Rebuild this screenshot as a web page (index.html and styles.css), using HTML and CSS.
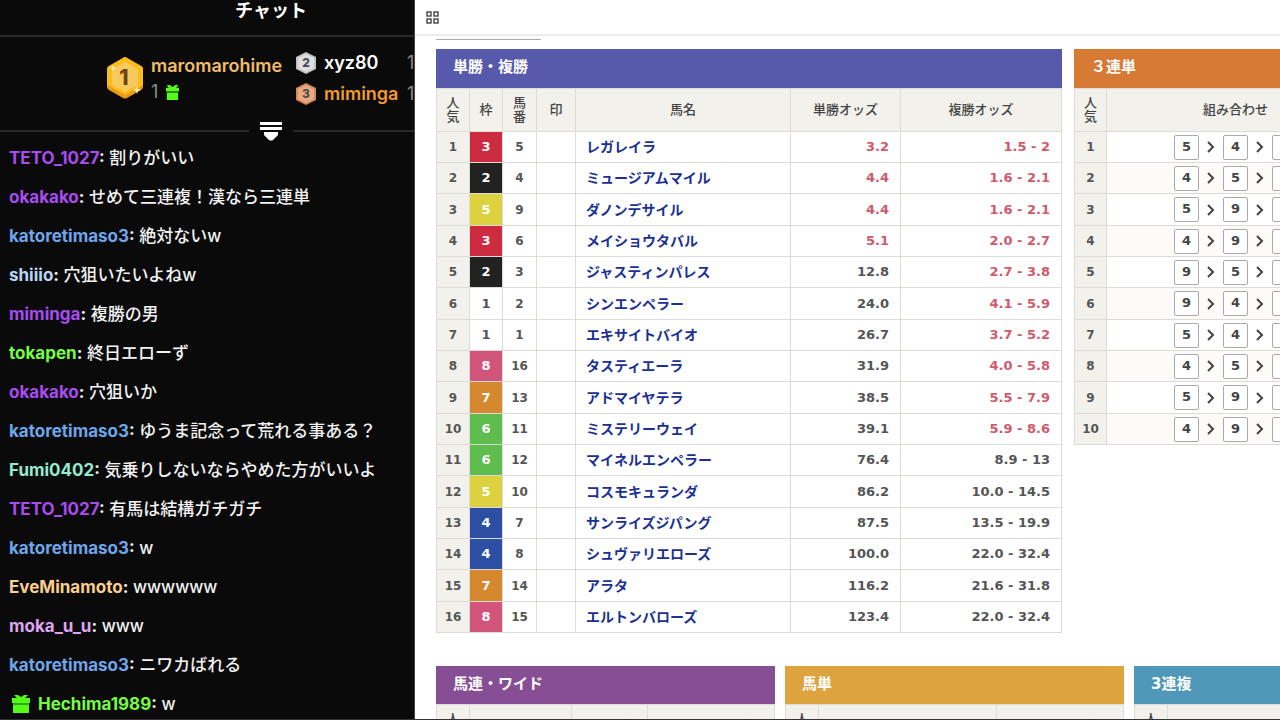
FILE: index.html
```
<!DOCTYPE html>
<html lang="ja">
<head>
<meta charset="utf-8">
<title>オッズ</title>
<link rel="stylesheet" href="styles.css">
</head>
<body>

<div class="screen">
    <aside class="chat">
        <div class="chat-inner">
            <h1 class="chat-title">チャット</h1>

            <div class="leaders">
                <svg class="medal-big" viewBox="0 0 36 42">
                    <path d="M16 1 Q18 -1 20 1 L34 9 Q36 10 36 12 V30 Q36 32 34 33 L20 41 Q18 42 16 41 L2 33 Q0 32 0 30 V12 Q0 10 2 9 Z" fill="#ee9a10"/>
                    <path d="M16 1 Q18 -1 20 1 L34 9 Q36 10 36 12 V28 L18 38 L0 28 V12 Q0 10 2 9 Z" fill="#fbbd1c"/>
                    <path d="M18 5 L31 12 V28 L18 35 L5 28 V12 Z" fill="#f8c95c"/>
                    <path d="M30 29 L31 32 L34 33 L31 34 L30 37 L29 34 L26 33 L29 32 Z" fill="#fff3c4"/>
                    <path d="M6 8 L7 10 L9 11 L7 12 L6 14 L5 12 L3 11 L5 10 Z" fill="#fff0a8"/>
                    <text x="17" y="28" class="medal-num-big">1</text>
                </svg>
                <div class="leader-first">
                    <a href="#" class="leader gold">maromarohime</a>
                    <div class="gifts">1
                        <svg class="gift-small" viewBox="0 0 16 16"><path d="M1 3 H4 L2 0 H5 L8 2 L11 0 H14 L12 3 H15 V7 H1 Z M2 8 H14 V16 H2 Z"/></svg>
                    </div>
                </div>
                <div class="leader-rest">
                    <div class="leader-row">
                        <svg class="medal" viewBox="0 0 20 22">
                            <path d="M10 0 L20 5 V17 L10 22 L0 17 V5 Z" fill="#c2c2c5"/>
                            <path d="M10 2 L18 6 V16 L10 20 L2 16 V6 Z" fill="#dfdfe2"/>
                            <text x="10" y="15" class="medal-num">2</text>
                        </svg>
                        <a href="#" class="leader white">xyz80</a><span class="count">1</span>
                    </div>
                    <div class="leader-row">
                        <svg class="medal" viewBox="0 0 20 22">
                            <path d="M10 0 L20 5 V17 L10 22 L0 17 V5 Z" fill="#d38b5a"/>
                            <path d="M10 2 L18 6 V16 L10 20 L2 16 V6 Z" fill="#eaa980"/>
                            <text x="10" y="15" class="medal-num">3</text>
                        </svg>
                        <a href="#" class="leader orange">miminga</a><span class="count">1</span>
                    </div>
                </div>
            </div>

            <div class="divider">
                <svg viewBox="0 0 22 20" width="22" height="20">
                    <path d="M0 1 H22 V4 H0 Z M0 6 H22 V9 H0 Z M4 11 H18 V14 L13 19 Q11 20 9 19 L4 14 Z" fill="#fff"/>
                </svg>
            </div>

            <ul class="messages">
                <li><a href="#" class="purple">TETO_1027</a><b>:</b> 割りがいい</li>
                <li><a href="#" class="purple">okakako</a><b>:</b> せめて三連複！漢なら三連単</li>
                <li><a href="#" class="blue">katoretimaso3</a><b>:</b> 絶対ないw</li>
                <li><a href="#" class="pale">shiiio</a><b>:</b> 穴狙いたいよねw</li>
                <li><a href="#" class="purple">miminga</a><b>:</b> 複勝の男</li>
                <li><a href="#" class="green">tokapen</a><b>:</b> 終日エローず</li>
                <li><a href="#" class="purple">okakako</a><b>:</b> 穴狙いか</li>
                <li><a href="#" class="blue">katoretimaso3</a><b>:</b> ゆうま記念って荒れる事ある？</li>
                <li><a href="#" class="mint">Fumi0402</a><b>:</b> 気乗りしないならやめた方がいいよ</li>
                <li><a href="#" class="purple">TETO_1027</a><b>:</b> 有馬は結構ガチガチ</li>
                <li><a href="#" class="blue">katoretimaso3</a><b>:</b> w</li>
                <li><a href="#" class="sand">EveMinamoto</a><b>:</b> wwwwww</li>
                <li><a href="#" class="lilac">moka_u_u</a><b>:</b> www</li>
                <li><a href="#" class="blue">katoretimaso3</a><b>:</b> ニワカばれる</li>
                <li><svg class="gift" viewBox="0 0 18 18"><path d="M0 3 H5 L2 0 H6 L9 2 L12 0 H16 L13 3 H18 V8 H0 Z"/><path d="M1 8 H17 V10 H1 Z" fill="#2cab18"/><path d="M1 10 H17 V18 H1 Z"/></svg><a href="#" class="green">Hechima1989</a><b>:</b> w</li>
            </ul>
        </div>
    </aside>

    <main class="page">
        <div class="toolbar">
            <button class="apps" aria-label="アプリ">
                <svg viewBox="0 0 13 13" width="13" height="13" fill="none" stroke="#444" stroke-width="1.4">
                    <rect x="1" y="1" width="4" height="4"/><rect x="8" y="1" width="4" height="4"/>
                    <rect x="1" y="8" width="4" height="4"/><rect x="8" y="8" width="4" height="4"/>
                </svg>
            </button>
        </div>
        <div class="content">
            <div class="tab-line"></div>
            <div class="row">
                <section class="box win">
                    <h2 class="indigo">単勝・複勝</h2>
                    <table>
                        <thead>
                            <tr>
                                <th class="c-rank">人<br>気</th>
                                <th class="c-rank">枠</th>
                                <th class="c-num">馬<br>番</th>
                                <th class="c-mark">印</th>
                                <th>馬名</th>
                                <th class="c-odds">単勝オッズ</th>
                                <th class="c-place">複勝オッズ</th>
                            </tr>
                        </thead>
                        <tbody id="win-rows"></tbody>
                    </table>
                </section>
                <section class="box tri">
                    <h2 class="orange-bar">３連単</h2>
                    <table>
                        <thead>
                            <tr><th class="c-rank">人<br>気</th><th class="c-combo">組み合わせ</th><th>オッズ</th></tr>
                        </thead>
                        <tbody id="tri-rows"></tbody>
                    </table>
                </section>
            </div>
            <div class="row">
                <section class="box third">
                    <h2 class="violet">馬連・ワイド</h2>
                    <table>
                        <thead>
                            <tr><th class="c-rank">人<br>気</th><th class="c-pair">組み合わせ</th><th class="c-short">オッズ</th><th>ワイドオッズ</th></tr>
                        </thead>
                    </table>
                </section>
                <section class="box third">
                    <h2 class="amber">馬単</h2>
                    <table>
                        <thead>
                            <tr><th class="c-rank">人<br>気</th><th class="c-exacta">組み合わせ</th><th>馬単オッズ</th></tr>
                        </thead>
                    </table>
                </section>
                <section class="box third">
                    <h2 class="teal">3連複</h2>
                    <table>
                        <thead>
                            <tr><th class="c-rank">人<br>気</th><th class="c-exacta">組み合わせ</th><th>オッズ</th></tr>
                        </thead>
                    </table>
                </section>
            </div>
        </div>
    </main>
</div>

<script src="script.js"></script>
</body>
</html>
```
FILE: styles.css
```
* {
    box-sizing: border-box;
}
body {
    margin: 0;
    background: #fff;
    font-family: "DejaVu Sans", "Noto Sans CJK JP", sans-serif;
}
a {
    color: inherit;
    text-decoration: none;
}
.screen {
    display: flex;
    height: 100vh;
    overflow: hidden;
    border-bottom: 1px solid #333;
}

/* chat */
.chat {
    flex: 0 0 415px;
    overflow: hidden;
    background: #0a0a0b;
    border-right: 1px solid #444;
    color: #f2f2f2;
    font-family: Inter, "Noto Sans CJK JP", sans-serif;
    font-size: 17px;
}
.chat-inner {
    width: 542px;
}
.chat-title {
    height: 37px;
    margin: 0;
    border-bottom: 2px solid #29292b;
    color: #fff;
    font-size: 18px;
    line-height: 22px;
    text-align: center;
}
.leaders {
    display: flex;
    height: 84px;
    padding: 10px 0 0 107px;
}
.medal-big {
    width: 36px;
    height: 42px;
    margin-top: 10px;
}
.medal-num-big, .medal-num {
    fill: #6b4512;
    font-size: 21px;
    font-weight: 800;
    text-anchor: middle;
}
.medal-num {
    fill: #4c4c50;
    font-size: 12px;
}
.leader-first {
    width: 153px;
    padding: 7px 0 0 8px;
}
.leader {
    font-size: 18px;
    font-weight: 600;
    line-height: 24px;
}
.gold { color: #f0bd6b; }
.white { color: #fff; }
.orange { color: #f39a2b; }
.gifts {
    display: flex;
    align-items: center;
    gap: 7px;
    color: #8c8c90;
    font-size: 18px;
    line-height: 28px;
}
.gift-small {
    width: 15px;
    height: 15px;
    fill: #53fc18;
}
.leader-row {
    display: flex;
    align-items: center;
    height: 31px;
}
.medal {
    width: 20px;
    height: 22px;
    margin-right: 8px;
}
.leader-row .leader {
    width: 83px;
}
.count {
    color: #8c8c90;
    font-size: 18px;
}
.divider {
    display: flex;
    align-items: center;
    gap: 11px;
    height: 20px;
}
.divider::before, .divider::after {
    content: "";
    flex: 1;
    height: 2px;
    background: #29292b;
}
.messages {
    margin: 0;
    padding: 0 9px;
    list-style: none;
}
.messages li {
    height: 39px;
    line-height: 34px;
    white-space: nowrap;
    font-weight: 500;
}
.messages a, .messages b {
    font-weight: 700;
}
.purple { color: #a84cf0; }
.blue { color: #6ea6ea; }
.pale { color: #b9d6f6; }
.green { color: #75fd46; }
.mint { color: #93ebd0; }
.sand { color: #fbcf8d; }
.lilac { color: #dea5f2; }
.gift {
    width: 18px;
    height: 18px;
    margin: 0 8px 0 3px;
    vertical-align: -3px;
    fill: #53fc18;
}

/* odds page */
.page {
    flex: 1;
    min-width: 0;
    overflow: hidden;
}
.toolbar {
    height: 36px;
    padding: 10px;
    border-bottom: 2px solid #ececec;
}
.apps {
    display: block;
    padding: 1px;
    border: 0;
    background: none;
}
.content {
    padding: 3px 0 0 21px;
}
.tab-line {
    width: 105px;
    height: 10px;
    border-top: 1px solid #aaa;
}
.row {
    display: flex;
    margin-bottom: 33px;
}
.box {
    flex: none;
}
.win {
    width: 626px;
    margin-right: 12px;
}
.tri {
    width: 400px;
}
.third {
    width: 339px;
    margin-right: 10px;
}
h2 {
    height: 39px;
    margin: 0;
    padding-left: 17px;
    color: #fff;
    font-size: 15px;
    line-height: 36px;
}
.third h2 {
    height: 38px;
}
.indigo { background: #5759aa; }
.orange-bar { background: #d67a34; }
.violet { background: #864f95; }
.amber { background: #dca33f; }
.teal { background: #4f98b8; }

table {
    width: 100%;
    border-collapse: collapse;
    table-layout: fixed;
    color: #555;
    font-size: 13px;
}
th, td {
    padding: 0;
    border: 1px solid #dcdbd6;
}
th {
    height: 43px;
    background: #f2f1ec;
    color: #444;
    font-weight: 500;
    line-height: 14px;
}
td {
    height: 31px;
    font-weight: 700;
    line-height: 20px;
    text-align: center;
}
tr:nth-child(3n) td {
    height: 32px;
}
.c-rank { width: 33px; }
.tri .c-rank { width: 32px; }
.c-num { width: 34px; }
.c-mark { width: 39px; }
.c-odds { width: 110px; }
.c-place { width: 161px; }
.c-combo { width: 258px; }
.c-pair { width: 102px; }
.c-short { width: 76px; }
.c-exacta { width: 178px; }
.rank {
    background: #f2f1ec;
}
.rank, .num {
    font-size: 12px;
}
.frame {
    color: #fff;
}
.f1 { background: #fff; color: #555; }
.f2 { background: #222; }
.f3 { background: #cc2b40; }
.f4 { background: #2d4fa3; }
.f5 { background: #ded140; }
.f6 { background: #5fbd4d; }
.f7 { background: #d6882f; }
.f8 { background: #d1557b; }
.name {
    padding-left: 10px;
    color: #1a3193;
    font-size: 14px;
    text-align: left;
}
.odds {
    padding-right: 11px;
    text-align: right;
}
.hot {
    color: #cf5a6c;
}
.tri tbody tr:nth-child(even) td:not(.rank) {
    background: #fcfbf8;
}
.combo {
    display: flex;
    align-items: center;
    justify-content: center;
}
.pick {
    width: 25px;
    height: 25px;
    border: 1px solid #aaa;
    border-radius: 2px;
    background: #fff;
    color: #444;
    line-height: 22px;
}
.arrow {
    width: 8px;
    height: 12px;
    margin: 0 8px;
    fill: none;
    stroke: #444;
    stroke-width: 2;
}
```
FILE: script.js
```
// frame, number, name, win odds, place odds
const horses = [
    [3, 5, "レガレイラ", "3.2", "1.5 - 2"],
    [2, 4, "ミュージアムマイル", "4.4", "1.6 - 2.1"],
    [5, 9, "ダノンデサイル", "4.4", "1.6 - 2.1"],
    [3, 6, "メイショウタバル", "5.1", "2.0 - 2.7"],
    [2, 3, "ジャスティンパレス", "12.8", "2.7 - 3.8"],
    [1, 2, "シンエンペラー", "24.0", "4.1 - 5.9"],
    [1, 1, "エキサイトバイオ", "26.7", "3.7 - 5.2"],
    [8, 16, "タスティエーラ", "31.9", "4.0 - 5.8"],
    [7, 13, "アドマイヤテラ", "38.5", "5.5 - 7.9"],
    [6, 11, "ミステリーウェイ", "39.1", "5.9 - 8.6"],
    [6, 12, "マイネルエンペラー", "76.4", "8.9 - 13"],
    [5, 10, "コスモキュランダ", "86.2", "10.0 - 14.5"],
    [4, 7, "サンライズジパング", "87.5", "13.5 - 19.9"],
    [4, 8, "シュヴァリエローズ", "100.0", "22.0 - 32.4"],
    [7, 14, "アラタ", "116.2", "21.6 - 31.8"],
    [8, 15, "エルトンバローズ", "123.4", "22.0 - 32.4"]
];

const trifectas = [
    [5, 4, 9], [4, 5, 9], [5, 9, 4], [4, 9, 5], [9, 5, 4],
    [9, 4, 5], [5, 4, 6], [4, 5, 6], [5, 9, 6], [4, 9, 6]
];

function hot(odds) {
    return parseFloat(odds) < 10 ? " hot" : "";
}

let rows = "";
horses.forEach(([frame, num, name, win, place], i) => {
    // place odds are only highlighted while the upper end is under 10
    const placeHot = hot(place.split(" - ")[1]);
    rows += `<tr>
        <td class="rank">${i + 1}</td>
        <td class="frame f${frame}">${frame}</td>
        <td class="num">${num}</td>
        <td></td>
        <td class="name"><a href="#">${name}</a></td>
        <td class="odds${hot(win)}">${win}</td>
        <td class="odds${placeHot}">${place}</td>
    </tr>`;
});
document.getElementById("win-rows").innerHTML = rows;

const arrow = '<svg class="arrow" viewBox="0 0 8 12"><path d="M1 1 L6 6 L1 11"/></svg>';
rows = "";
trifectas.forEach((picks, i) => {
    const boxes = picks.map(n => `<span class="pick">${n}</span>`).join(arrow);
    rows += `<tr><td class="rank">${i + 1}</td><td><div class="combo">${boxes}</div></td><td></td></tr>`;
});
document.getElementById("tri-rows").innerHTML = rows;
```
